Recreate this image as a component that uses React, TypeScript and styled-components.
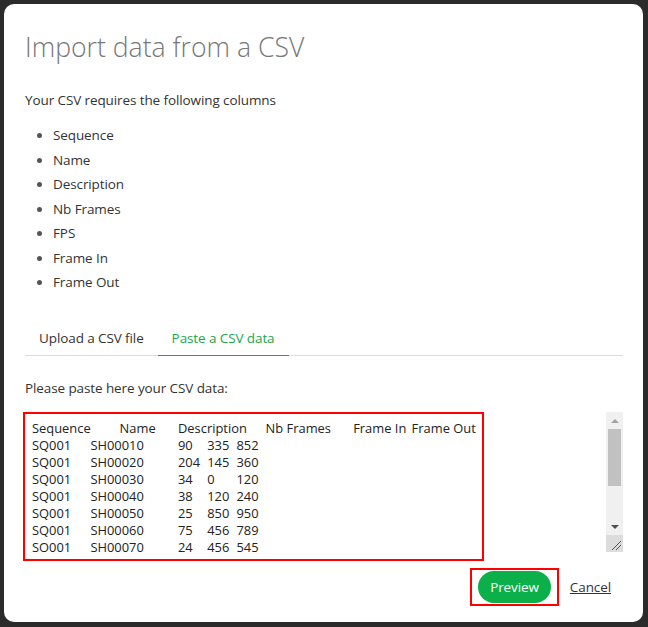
import React from "react";
import styled, { createGlobalStyle } from "styled-components";

const GlobalStyle = createGlobalStyle`
  html, body {
    margin: 0;
    padding: 0;
    background: #2b2b2b;
  }
  body {
    font-family: "Open Sans", "Noto Sans", sans-serif;
    color: #333;
  }
`;

const Page = styled.div`
  box-sizing: border-box;
  height: 627px;
  padding: 4px 5px 5px 4px;
`;

const Modal = styled.div`
  box-sizing: border-box;
  height: 618px;
  background: #fff;
  border-radius: 10px;
  padding: 25px 20px 16px 21px;
  display: flex;
  flex-direction: column;
`;

const Title = styled.h1`
  margin: 0;
  font-size: 26.6px;
  font-weight: 300;
  line-height: 36px;
  color: #777;
`;

const Intro = styled.p`
  margin: 25px 0 0;
  font-size: 13.5px;
  letter-spacing: -0.1px;
  line-height: 20px;
`;

const ColumnList = styled.ul`
  margin: 13px 0 0;
  padding-left: 28px;
  font-size: 13.5px;
  letter-spacing: -0.1px;
  line-height: 24.5px;
  li::marker {
    color: #555;
  }
`;

const TabBar = styled.div`
  margin-top: 25px;
  display: flex;
  border-bottom: 1px solid #ddd;
`;

const Tab = styled.div<{ $active?: boolean }>`
  padding: 8px 14px 7px;
  font-size: 13.5px;
  letter-spacing: -0.1px;
  line-height: 20px;
  color: ${(p) => (p.$active ? "#1aa84f" : "#333")};
  border-bottom: 1px solid ${(p) => (p.$active ? "#1aa84f" : "transparent")};
  margin-bottom: -1px;
  cursor: pointer;
`;

const Prompt = styled.p`
  margin: 22px 0 0;
  font-size: 13.5px;
  letter-spacing: -0.1px;
  line-height: 20px;
`;

const Editor = styled.div`
  position: relative;
  margin-top: 14.5px;
  height: 140px;
  display: flex;
`;

const DataArea = styled.textarea`
  flex: 1;
  margin: 0;
  border: none;
  outline: none;
  resize: none;
  overflow: hidden;
  padding: 7.5px 7px;
  font-family: "Open Sans", "Noto Sans", sans-serif;
  font-size: 12.9px;
  line-height: 17px;
  color: #222;
  tab-size: 29.2px;
  white-space: pre;
  background: #fff;
`;

const Scrollbar = styled.div`
  width: 17px;
  background: #f0f0f0;
  display: flex;
  flex-direction: column;
`;

const ScrollButton = styled.div`
  height: 17px;
  display: flex;
  align-items: center;
  justify-content: center;
`;

const Arrow = styled.div<{ $dir: "up" | "down"; $enabled?: boolean }>`
  width: 0;
  height: 0;
  border-left: 4px solid transparent;
  border-right: 4px solid transparent;
  ${(p) =>
    p.$dir === "up"
      ? `border-bottom: 4px solid ${p.$enabled ? "#505050" : "#a3a3a3"};`
      : `border-top: 4px solid ${p.$enabled ? "#505050" : "#a3a3a3"};`}
`;

const Thumb = styled.div`
  height: 57px;
  margin: 0 2px;
  background: #c1c1c1;
`;

const Track = styled.div`
  flex: 1;
`;

const Corner = styled.div`
  height: 17px;
  background: #dcdcdc;
  display: flex;
  align-items: flex-end;
  justify-content: flex-end;
`;

const Highlight = styled.div`
  position: absolute;
  left: -2px;
  top: 0;
  width: 461px;
  height: 149px;
  box-sizing: border-box;
  border: 2px solid #f00;
  pointer-events: none;
`;

const Footer = styled.div`
  margin-top: 16px;
  display: flex;
  justify-content: flex-end;
  align-items: center;
`;

const ButtonFrame = styled.div`
  border: 2px solid #f00;
  padding: 1px 6px;
  display: flex;
`;

const PrimaryButton = styled.button`
  height: 32px;
  padding: 0 12px;
  border: none;
  border-radius: 16px;
  background: #0bb04a;
  color: #fff;
  font-family: "Open Sans", "Noto Sans", sans-serif;
  font-size: 13.5px;
  letter-spacing: -0.1px;
  cursor: pointer;
`;

const CancelLink = styled.a`
  margin: 0 12px 0 11px;
  font-size: 13.5px;
  letter-spacing: -0.1px;
  color: #333;
  text-decoration: underline;
  cursor: pointer;
`;

const columns = [
  "Sequence",
  "Name",
  "Description",
  "Nb Frames",
  "FPS",
  "Frame In",
  "Frame Out",
];

const csv = [
  "Sequence\tName\tDescription\tNb Frames\tFrame In\tFrame Out",
  "SQ001\tSH00010\t\t90\t335\t852",
  "SQ001\tSH00020\t\t204\t145\t360",
  "SQ001\tSH00030\t\t34\t0\t120",
  "SQ001\tSH00040\t\t38\t120\t240",
  "SQ001\tSH00050\t\t25\t850\t950",
  "SQ001\tSH00060\t\t75\t456\t789",
  "SO001\tSH00070\t\t24\t456\t545",
  "SQ001\tSH00080\t\t48\t200\t248",
  "SQ001\tSH00090\t\t60\t300\t360",
].join("\n");

export default function App() {
  return (
    <>
      <GlobalStyle />
      <Page>
        <Modal>
          <Title>Import data from a CSV</Title>
          <Intro>Your CSV requires the following columns</Intro>
          <ColumnList>
            {columns.map((c) => (
              <li key={c}>{c}</li>
            ))}
          </ColumnList>
          <TabBar>
            <Tab>Upload a CSV file</Tab>
            <Tab $active>Paste a CSV data</Tab>
          </TabBar>
          <Prompt>Please paste here your CSV data:</Prompt>
          <Editor>
            <DataArea readOnly value={csv} spellCheck={false} />
            <Scrollbar>
              <ScrollButton>
                <Arrow $dir="up" />
              </ScrollButton>
              <Thumb />
              <Track />
              <ScrollButton>
                <Arrow $dir="down" $enabled />
              </ScrollButton>
              <Corner>
                <svg width="17" height="17" viewBox="0 0 17 17">
                  <line x1="6" y1="15" x2="15" y2="6" stroke="#555" strokeWidth="1" />
                  <line x1="10" y1="15" x2="15" y2="10" stroke="#555" strokeWidth="1" />
                </svg>
              </Corner>
            </Scrollbar>
            <Highlight />
          </Editor>
          <Footer>
            <ButtonFrame>
              <PrimaryButton>Preview</PrimaryButton>
            </ButtonFrame>
            <CancelLink>Cancel</CancelLink>
          </Footer>
        </Modal>
      </Page>
    </>
  );
}
